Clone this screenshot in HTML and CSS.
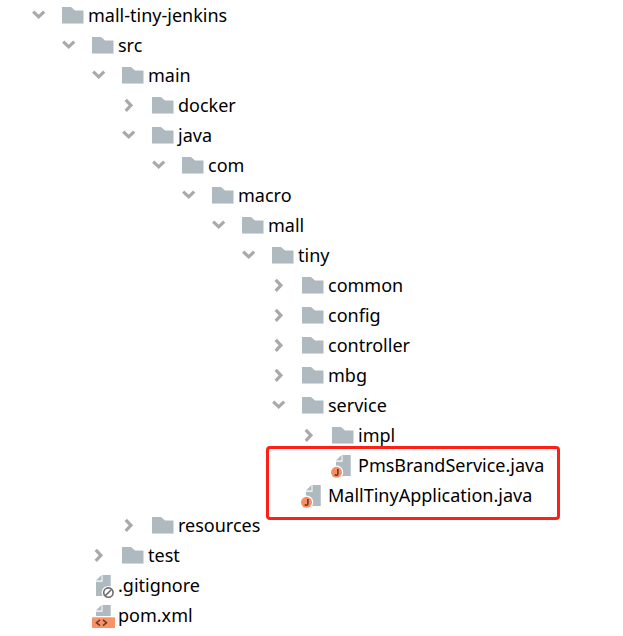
FILE: index.html
```html
<!DOCTYPE html>
<html lang="en">
<head>
<meta charset="utf-8">
<title>mall-tiny-jenkins</title>
<link rel="stylesheet" href="styles.css">
</head>
<body>
<svg class="sprite" aria-hidden="true">
  <symbol id="chevron" viewBox="0 0 14 14"><path d="M1.200 3.700 6.700 8.900 12.200 3.700" fill="none" stroke="#a9a9a9" stroke-width="3.200"/></symbol>
  <symbol id="folder" viewBox="0 0 24 24"><path d="M1 4h9l4 3.500h8.500v13H1z" fill="#afb9c0"/><path d="M1 20.500h21.500" stroke="#d3d9dd"/></symbol>
  <symbol id="page" viewBox="0 0 24 24"><path d="M5 7.500 10.500 2v5.500z" fill="#afb9c0"/><path d="M11.500 2h8.200v21H5V8.700h6.500z" fill="#afb9c0"/></symbol>
  <symbol id="java" viewBox="0 0 24 24" overflow="visible">
    <use href="#page"/>
    <circle cx="5.500" cy="19.300" r="6.700" fill="#fff"/>
    <circle cx="5.500" cy="19.300" r="5.500" fill="#f68f62"/>
    <path d="M6.900 16v4.600q0 1.700-1.600 1.700-.9 0-1.600-.6" fill="none" stroke="#643a2b" stroke-width="1.600"/>
  </symbol>
  <symbol id="ignored" viewBox="0 0 24 24" overflow="visible">
    <use href="#page"/>
    <circle cx="17.400" cy="19.600" r="6.700" fill="#fff"/>
    <circle cx="17.400" cy="19.600" r="4.700" fill="none" stroke="#6b6b6b" stroke-width="1.600"/>
    <path d="m14.100 22.900 6.600-6.600" stroke="#6b6b6b" stroke-width="1.600"/>
  </symbol>
  <symbol id="xml" viewBox="0 0 24 24" overflow="visible">
    <path d="M5 7.500 10.500 2v5.500z" fill="#afb9c0"/><path d="M11.500 2h8.200v11H5V8.700h6.500z" fill="#afb9c0"/>
    <path d="M1 14.300h23V25H1z" fill="#f79367"/>
    <path d="M9 16.800 5.500 19.700 9 22.600M12 16.800l3.500 2.900-3.500 2.900" fill="none" stroke="#643a2b" stroke-width="1.500"/>
  </symbol>
</svg>
<nav class="tree" aria-label="Project files"></nav>
<script src="tree.js"></script>
</body>
</html>
```
FILE: styles.css
```css
body {
  margin: 0;
  background: #fff;
  color: #000;
  font-family: "Noto Sans", "Open Sans", sans-serif;
  font-size: 18px;
  line-height: 30px;
}

.sprite {
  position: absolute;
  width: 0;
  height: 0;
}

.tree {
  padding-left: 32px;
}

.tree ul {
  margin: 0;
  padding: 0;
  list-style: none;
}

.tree ul ul {
  padding-left: 30px;
}

.row {
  display: flex;
  align-items: center;
  height: 30px;
  white-space: nowrap;
}

.toggle,
.spacer {
  flex: none;
  width: 14px;
  height: 14px;
  margin-right: 15px;
}

.toggle {
  display: flex;
  padding: 0;
  border: 0;
  background: none;
  cursor: pointer;
}

.chevron {
  width: 14px;
  height: 14px;
}

.toggle[aria-expanded="false"] .chevron {
  transform: rotate(-90deg);
}

.icon {
  flex: none;
  width: 24px;
  height: 24px;
  margin-right: 3px;
  overflow: visible;
}

.marked {
  position: relative;
}

.marked::after {
  content: "";
  position: absolute;
  top: -34px;
  left: -6px;
  box-sizing: border-box;
  width: 294px;
  height: 74px;
  border: 3px solid #ff2015;
  border-radius: 4px;
  pointer-events: none;
}
```
FILE: tree.js
```js
const folder = (name, children = [], open = children.length > 0) =>
  ({ name, icon: "folder", children, open });
const file = (name, icon, marked = false) => ({ name, icon, marked });

const project = folder("mall-tiny-jenkins", [
  folder("src", [
    folder("main", [
      folder("docker"),
      folder("java", [
        folder("com", [
          folder("macro", [
            folder("mall", [
              folder("tiny", [
                folder("common"),
                folder("config"),
                folder("controller"),
                folder("mbg"),
                folder("service", [
                  folder("impl"),
                  file("PmsBrandService.java", "java")
                ]),
                file("MallTinyApplication.java", "java", true)
              ])
            ])
          ])
        ])
      ]),
      folder("resources")
    ]),
    folder("test")
  ]),
  file(".gitignore", "ignored"),
  file("pom.xml", "xml")
]);

function render(node) {
  const control = node.children
    ? `<button class="toggle" type="button" aria-expanded="${node.open}" aria-label="${node.name}"><svg class="chevron"><use href="#chevron"/></svg></button>`
    : `<span class="spacer"></span>`;
  const list = node.children && node.children.length
    ? `<ul>${node.children.map(render).join("")}</ul>`
    : "";
  return `<li><div class="row${node.marked ? " marked" : ""}">${control}<svg class="icon" aria-hidden="true"><use href="#${node.icon}"/></svg><span>${node.name}</span></div>${list}</li>`;
}

const tree = document.querySelector(".tree");
tree.innerHTML = `<ul>${render(project)}</ul>`;
tree.addEventListener("click", (event) => {
  const toggle = event.target.closest(".toggle");
  if (!toggle) return;
  const open = toggle.getAttribute("aria-expanded") !== "true";
  toggle.setAttribute("aria-expanded", open);
  const list = toggle.closest("li").querySelector("ul");
  if (list) list.hidden = !open;
});
```
